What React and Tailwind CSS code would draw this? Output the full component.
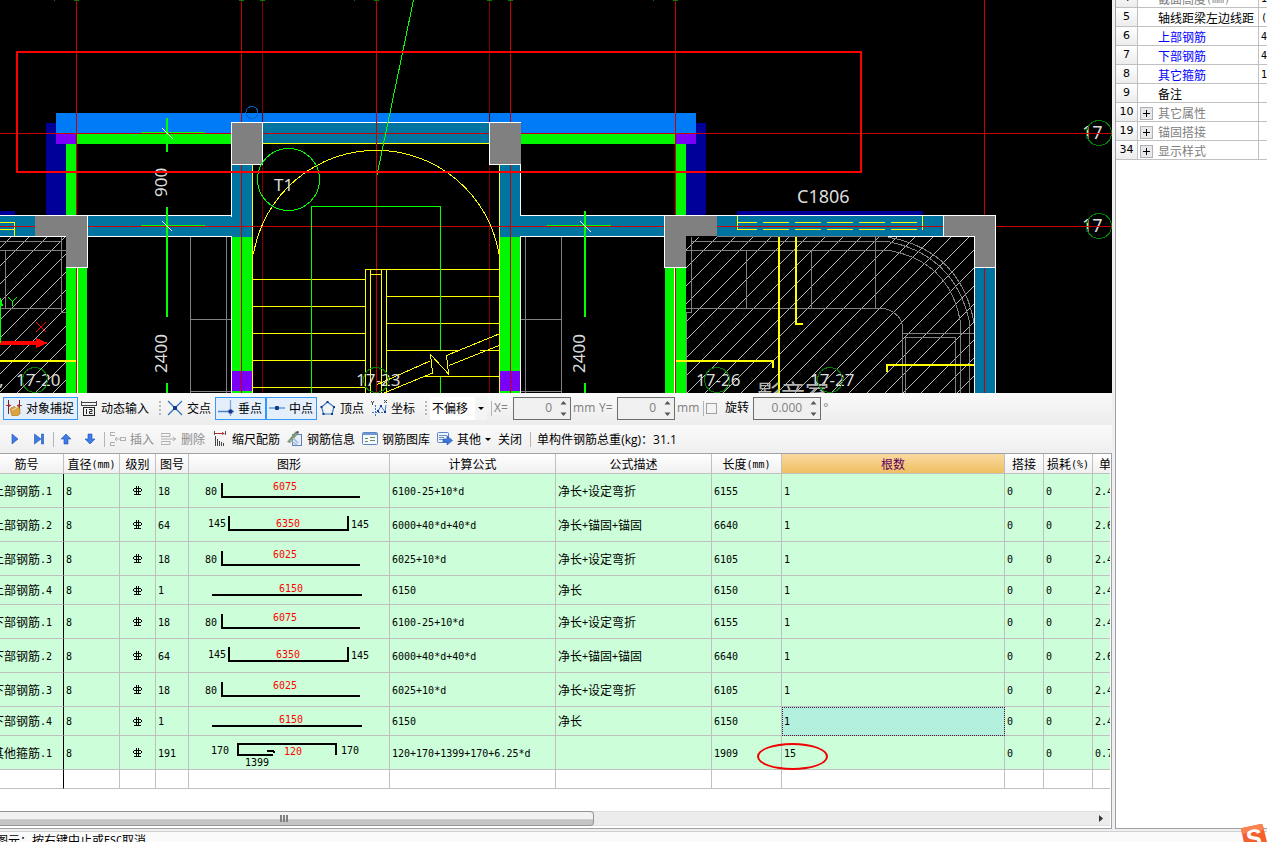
import { Fragment } from "react";

const MONO = "font-['DejaVu_Sans_Mono',monospace] text-[10px]";

/* CJK runs stay at 12px, latin runs switch to a 6px wide fixed pitch */
function Mixed({ text }) {
  return text.split(/([\x20-\x7e]+)/).map((part, i) =>
    i % 2 ? (
      <span key={i} className={`${MONO} whitespace-pre align-[1px] leading-none`}>{part}</span>
    ) : (
      <Fragment key={i}>{part}</Fragment>
    )
  );
}

/* ---------- CAD view ---------- */

const fills = [
  ["#000099", [[46, 123, 20, 92], [686, 123, 20, 92], [0, 211, 15, 4], [737, 211, 186, 4]]],
  ["#007bf7", [[56, 113, 640, 21]]],
  ["#0074a0", [
    [263, 123, 226, 20], [232, 165, 20, 72], [0, 216, 35, 20], [88, 216, 144, 20],
    [500, 165, 20, 72], [520, 216, 145, 20], [717, 216, 227, 20], [975, 268, 20, 125],
  ]],
  ["#00f700", [
    [77, 134, 154, 10], [521, 134, 155, 10], [66, 144, 10, 71], [676, 144, 10, 71],
    [66, 268, 21, 125], [665, 268, 21, 125], [232, 237, 20, 156], [500, 237, 20, 156],
  ]],
  ["#7b00f7", [[56, 134, 20, 10], [676, 134, 20, 10], [232, 371, 20, 20], [500, 371, 20, 20]]],
];

const columns = [
  [231, 122, 31, 42], [490, 122, 31, 42], [35, 216, 52, 20], [66, 216, 21, 51],
  [665, 216, 52, 20], [665, 216, 21, 51], [944, 216, 51, 20], [975, 216, 20, 51],
];

const stairs =
  "M253 279.5H365M253 306.5H365M253 333.5H365M253 360.5H365M253 387.5H365" +
  "M365.5 393V269.5H499M370.5 393V269M381.5 393V269M386.5 393V269M370 274.5H381" +
  "M386 296.5H499M386 323.5H499M386 350.5H458M480 350.5H499M424 376.5H499" +
  "M499 334L446.500 355.500L448.500 374L430.500 354.500L432.500 373L384 393M430 361L376 385M499 345.500L449 365.500";

const furniture =
  "M190.500 237V393M226.500 237V393M190 319.500H231M190 391.500H231" +
  "M525.500 237V393M561.500 237V393M521 319.500H561M521 391.500H561" +
  "M0 241.500H61M0 250.500H66M5.500 250V308M0 308.500H61M61.500 237V312.500H66V393" +
  "M691 241.500H888Q955 255 969.500 322V393M686 250.500H890Q950 262 960.500 322V393" +
  "M691.500 237V312.500H686V393M746.500 250V308M811.500 250V308M875.500 237V308" +
  "M686 308.500H885Q902 314 902.500 328V393M902 333.500H974M905.500 393V337.500H955.500V393M717 236.500H888" +
  "M888 237Q960 250 974 322";

const hatchLines = (x0, x1, y0, y1, first, step) => {
  let d = "";
  for (let c = first; c < x1 + y1; c += step) {
    const bx = Math.max(x0, c - y1);
    const tx = Math.min(x1, c - y0);
    if (tx > bx) d += `M${bx} ${c - bx}L${tx} ${c - tx}`;
  }
  return d;
};

function AxisBubble({ cx, cy }) {
  return <circle cx={cx} cy={cy} r="12.5" fill="none" stroke="#008000" />;
}

function CadView() {
  return (
    <svg className="block h-[393px] w-full shrink-0 bg-black" shapeRendering="crispEdges" role="img" aria-label="CAD">
      <path d={hatchLines(0, 66, 237, 393, 248, 18) + hatchLines(686, 974, 237, 393, 936, 18)} stroke="#b8b8b8" />
      <path d={furniture} stroke="#808080" fill="none" />

      {fills.map(([color, rects]) =>
        rects.map(([x, y, w, h]) => <rect key={`${x}-${y}`} x={x} y={y} width={w} height={h} fill={color} />)
      )}

      {/* wall outlines */}
      <path
        d="M262 122.500H490M231.500 164V393M88 215.500H231M88 236.500H231M0 215.500H35M0 236.500H66M520.500 164V215.500H665M520 236.500H665M520.500 237V393M717 215.500H944M888 236.500H975M974.500 237V393M995.500 215V393M77.500 268V393M674.500 268V393"
        stroke="#fff"
        fill="none"
      />
      <path d="M231.500 217V236" stroke="#0074a0" />
      <path d="M263 143.500H489M252.500 165V393M499.500 165V393" stroke="#ff0" />
      <path
        d="M737.500 216V230M922.500 216V230M737 222.500H757M737 229.500H757M0 222.500H14.500V236M0 229.500H14"
        stroke="#ff0"
        fill="none"
      />
      <path d="M763 222.500H917M763 229.500H917" stroke="#ff0" strokeDasharray="26 6" />

      {/* axes */}
      <path
        d="M76.500 0V215M76.500 268V393M241.500 0V393M376.500 0V393M510.500 0V393M675.500 0V215M675.500 268V393M984.500 0V393M0 133.500H1112M0 226.500H1112"
        stroke="#c80000"
        fill="none"
      />
      <path d="M262.500 0V393M489.500 0V393" stroke="#800000" />
      <path d="M54 .5H55M74 .5H79M239 .5H244M260 .5H265M354 .5H355M374 .5H379M487 .5H492M508 .5H513M673 .5H678M653 .5H654" stroke="#008000" />

      {columns.map(([x, y, w, h], i) => (
        <rect key={i} x={x} y={y} width={w} height={h} fill="#808080" />
      ))}
      <path
        d="M231.500 122.500H262.500V164.500H231.500ZM521 122.500H489.500V164.500H520M35 215.500H87.500V267.500H66M717 215.500H664.500V267.500H686M943.500 236V215.500H995.500V267.500H975M943 236.500H974.500V267"
        stroke="#fff"
        fill="none"
      />

      {/* stairwell */}
      <path d={stairs} stroke="#ff0" fill="none" />
      <path d="M253.500 254A124.500 124.500 0 0 1 499 254" stroke="#ff0" fill="none" />
      <path d="M311.500 393V206.500H440.500V350M440.500 377V393" stroke="#0f0" fill="none" />
      <circle cx="288.5" cy="179.500" r="31" stroke="#0f0" fill="none" />
      <path d="M413.500 0L377 175" stroke="#0f0" />
      <circle cx="252" cy="112.500" r="6" stroke="#0060c8" fill="none" />

      {/* dimensions */}
      <path d="M167 118V152M167 207V317M167 383V393M585 211V317M585 383V393" stroke="#0f0" strokeWidth="2" />
      <path d="M141 132.500H205M141 225.500H205M547 225.500H611" stroke="#0f0" />
      <path d="M162 128L173 139M162 221L172 231M580 221L591 232" stroke="#fff" />

      <path
        d="M0 361H76M676 361H773V368M779 237V393M796 237V324H803M887 372V365H974"
        stroke="#ff0"
        strokeWidth="2"
        fill="none"
      />

      {/* UCS marker */}
      <path d="M0 343H38" stroke="#f00" strokeWidth="4" />
      <path d="M36 338L48 343L36 348Z" fill="#f00" />
      <path d="M0 300V343" stroke="#0f0" strokeWidth="2" />
      <path d="M0 296L3 306H0Z" fill="#0f0" />
      <path d="M8 297L12.500 301.500L17 297M12.500 301V306" stroke="#0f0" fill="none" />
      <path d="M36 322L46 332M46 322L36 332" stroke="#f00" />

      <g className="fill-[#dcdcdc] font-['Noto_Sans',sans-serif] text-[17px]">
        <text x="274" y="191">T1</text>
        <text x="797" y="203" className="text-[18px]">C1806</text>
        <text x="16" y="386">17-20</text>
        <text x="-1" y="386">,</text>
        <text x="356" y="386">17-23</text>
        <text x="696" y="386">17-26</text>
        <text x="810" y="386">17-27</text>
        <text x="1082" y="139" className="text-[18px]">17</text>
        <text x="1082" y="232" className="text-[18px]">17</text>
        <text transform="translate(167 197) rotate(-90)">900</text>
        <text transform="translate(167 373) rotate(-90)">2400</text>
        <text transform="translate(585 373) rotate(-90)">2400</text>
        <text x="757" y="402" className="fill-[#b4b4b4] font-['Noto_Sans_CJK_SC',sans-serif] text-[24px]">影音室</text>
      </g>
      <AxisBubble cx={35} cy={380} />
      <AxisBubble cx={376} cy={380} />
      <AxisBubble cx={717} cy={380} />
      <AxisBubble cx={830} cy={380} />
      <AxisBubble cx={1099} cy={133} />
      <AxisBubble cx={1099} cy={226} />
      <path d="M1082 133.500H1112M1082 226.500H1112M376.500 368V393" stroke="#c80000" />

      <rect x="17" y="52" width="844" height="120" fill="none" stroke="#f00" strokeWidth="2" />
    </svg>
  );
}

/* ---------- toolbar icons ---------- */

function Icon({ children }) {
  return (
    <svg width="16" height="16" viewBox="0 0 16 16" fill="none" className="shrink-0">
      {children}
    </svg>
  );
}

const icons = {
  snap: (
    <Icon>
      <path d="M2.500 0V14M13.500 0V14" stroke="#7a1f1f" />
      <path d="M0 5.500H5M11 5.500H16" stroke="#a33" />
      <path d="M3 4l2 1.500-2 1.500zM13 4l-2 1.500 2 1.500z" fill="#a33" />
      <path d="M4 9l2-2 1 2 1-3 2 2 2-2 2 3v5l-3 2H6z" fill="#d9a441" stroke="#a87422" strokeWidth=".6" />
      <path d="M6 10l6-3" stroke="#f8e3a8" />
    </Icon>
  ),
  dynamic: (
    <Icon>
      <path d="M.5 1V5M15.500 1V5M1 2.500H15" stroke="#444" />
      <path d="M0 5.500H16" stroke="#444" />
      <rect x="2.500" y="7.500" width="11" height="8" stroke="#222" />
      <path d="M5.500 9V14M8 9.500H11V11.500H8.500V13.500H11.500" stroke="#222" />
    </Icon>
  ),
  cross: (
    <Icon>
      <path d="M1 1L15 15M15 1L1 15" stroke="#3070c0" strokeWidth="1.300" />
      <rect x="6" y="6" width="4" height="4" rx="1" fill="#123a8c" />
    </Icon>
  ),
  perp: (
    <Icon>
      <path d="M0 11.500H16" stroke="#4a82c8" strokeWidth="1.500" />
      <path d="M12.500 0V16" stroke="#7fa6d8" strokeWidth="1.300" />
      <rect x="10.500" y="9.500" width="4" height="4" rx="1" fill="#123a8c" />
    </Icon>
  ),
  mid: (
    <Icon>
      <path d="M0 8H16" stroke="#6a9ad4" strokeWidth="1.500" />
      <rect x="6" y="6" width="4" height="4" rx="1" fill="#123a8c" />
    </Icon>
  ),
  vertex: (
    <Icon>
      <path d="M7.500 2L14 7L12 14H3.500L1.500 7Z" stroke="#3a78c4" strokeWidth="1.200" />
      <path d="M6.500 1h2v2h-2zM0.500 6h2v2h-2zM13 6h2v2h-2zM2.500 13h2v2h-2zM11 13h2v2h-2z" fill="#123a8c" />
    </Icon>
  ),
  coord: (
    <Icon>
      <path d="M4.500 5V16M1 12.500H16" stroke="#3a78c4" strokeDasharray="2 1" />
      <path d="M7 11L10 6L14 12L15 5" stroke="#3a78c4" />
      <path d="M0 1l1.500 2L3 1M1.500 3v2M13 0l3 3M16 0l-3 3" stroke="#444" />
      <path d="M6 10h2v2H6zM9 5h2v2H9zM13 11h2v2h-2z" fill="#123a8c" />
    </Icon>
  ),
  insert: (
    <Icon>
      <path d="M0 1.500H5M0 4.500H5M0 11.500H5M0 14.500H5M.5 1V5M.5 11V15" stroke="#b0b0b0" />
      <path d="M5 8H10M7 6L5 8L7 10" stroke="#b0b0b0" />
      <rect x="10.500" y="6.500" width="5" height="3" stroke="#b0b0b0" />
    </Icon>
  ),
  remove: (
    <Icon>
      <path d="M0 2.500H9V5.500H0ZM0 10.500H9V13.500H0Z" stroke="#b0b0b0" />
      <path d="M0 8H15M12 6L14.500 8L12 10" stroke="#b0b0b0" />
    </Icon>
  ),
  scale: (
    <Icon>
      <path d="M2.500 0V4M13.500 0V4" stroke="#555" />
      <path d="M3 2.500H11" stroke="#a33" />
      <path d="M10 1l3 1.500-3 1.500z" fill="#a33" />
      <path d="M3.500 5V15M5.500 8V15M7.500 10V15M9.500 11V15M11.500 12V15" stroke="#444" />
    </Icon>
  ),
  info: (
    <Icon>
      <rect x="5.500" y="3.500" width="9" height="11" fill="#e6eefa" stroke="#5d82bb" />
      <path d="M0 11L8 1L11 3L3 12Z" fill="#7f9b74" />
      <path d="M8 1l3-1 1 1-1 2z" fill="#555" />
      <path d="M3 9L10 14M6 7l5 5" stroke="#9db5d6" strokeWidth="1.500" />
    </Icon>
  ),
  library: (
    <Icon>
      <rect x=".5" y="1.500" width="15" height="12" rx="1" fill="#f4f8ff" stroke="#5b86c5" />
      <path d="M1 3H15" stroke="#6e98d6" strokeWidth="2" />
      <path d="M3 7.500H6M8 6.500H13M3 10.500H6M8 9.500H13" stroke="#6a8a5a" />
    </Icon>
  ),
  other: (
    <Icon>
      <rect x=".5" y="1.500" width="11" height="10" rx="1" fill="#eef4fd" stroke="#5b86c5" />
      <path d="M2 4.500H10M2 6.500H7M2 8.500H7" stroke="#6c8fc4" />
      <path d="M6 8h4V5l5.500 4.500L10 14v-3H6z" fill="#3f78dc" stroke="#1c4fae" strokeWidth=".6" />
    </Icon>
  ),
};

function ToolButton({ icon, label, active, disabled, children }) {
  return (
    <button
      type="button"
      disabled={disabled}
      className={`flex h-[23px] shrink-0 items-center gap-1 border pl-[2px] pr-[3px] ${
        active ? "border-[#3399ff] bg-[#e4effb]" : "border-transparent"
      } ${disabled ? "text-[#8c8c8c]" : ""}`}
    >
      {icon && icons[icon]}
      <span>{label}</span>
      {children}
    </button>
  );
}

function NavButton({ label, d }) {
  return (
    <button type="button" aria-label={label} className="flex h-[23px] w-6 items-center justify-center">
      <svg width="12" height="12" viewBox="0 0 12 12">
        <path d={d} fill="#3f7be6" stroke="#1b50b5" strokeWidth=".6" />
      </svg>
    </button>
  );
}

const Sep = () => <span className="h-[15px] w-px bg-[#b4b4b4]" />;
const Grip = () => <span className="ml-[6px] mr-[3px] h-[14px] w-[2px] border-l-2 border-dotted border-[#b8b8b8]" />;

function Caret() {
  return (
    <svg width="6" height="3" viewBox="0 0 6 3" className="shrink-0">
      <path d="M0 0H6L3 3Z" fill="#000" />
    </svg>
  );
}

function Spin({ id, value, wide }) {
  return (
    <span className={`flex h-[23px] items-center border border-[#6d6d6d] bg-[#f0f0f0] ${wide ? "w-[68px]" : "w-[58px]"}`}>
      <input id={id} defaultValue={value} className="w-full min-w-0 bg-transparent pr-[8px] text-right outline-none" />
      <svg width="7" height="15" viewBox="0 0 7 15" className="mr-[3px] shrink-0">
        <path d="M0.500 3.500L3.500 0L6.500 3.500ZM0.500 11.500L3.500 15L6.500 11.500Z" fill="#555" />
      </svg>
    </span>
  );
}

function SnapBar() {
  return (
    <div className="flex h-8 items-center overflow-hidden bg-gradient-to-b from-[#fafafa] to-[#ececec] pb-[2px] pl-[3px]">
      <ToolButton icon="snap" label="对象捕捉" active />
      <ToolButton icon="dynamic" label="动态输入" />
      <Grip />
      <ToolButton icon="cross" label="交点" />
      <ToolButton icon="perp" label="垂点" active />
      <ToolButton icon="mid" label="中点" active />
      <ToolButton icon="vertex" label="顶点" />
      <ToolButton icon="coord" label="坐标" />
      <Grip />
      <span className="relative flex h-[23px] w-[57px] items-center bg-white">
        <select aria-label="偏移" className="h-full w-full appearance-none pl-[2px] outline-none">
          <option>不偏移</option>
        </select>
        <span className="pointer-events-none absolute inset-y-0 right-0 flex w-3 items-center justify-center bg-[#f4f4f4]">
          <Caret />
        </span>
      </span>
      <span className="w-1" />
      <Sep />
      <div className="flex items-center gap-[2px] pl-[2px] font-['Open_Sans','Noto_Sans_CJK_SC',sans-serif] text-[#808080]">
        <label htmlFor="dx" className="w-[17px]">X=</label>
        <Spin id="dx" value="0" />
        <span className="w-6">mm</span>
        <label htmlFor="dy" className="w-4">Y=</label>
        <Spin id="dy" value="0" />
        <span className="w-6">mm</span>
        <Sep />
        <input id="rot" type="checkbox" className="h-[11px] w-[11px] appearance-none border border-[#a0a0a0] bg-[#f4f4f4]" />
        <label htmlFor="rot" className="pl-[6px] pr-[2px] text-black">旋转</label>
        <Spin id="angle" value="0.000" wide />
        <label htmlFor="angle">°</label>
      </div>
    </div>
  );
}

function RebarBar() {
  return (
    <div className="flex h-7 items-center overflow-hidden bg-gradient-to-b from-[#fafafa] to-[#efefef] pl-[3px]">
      <NavButton label="下一条" d="M3 1V11L9 6Z" />
      <NavButton label="最后一条" d="M1.500 1V11L8 6ZM8.500 1H10.500V11H8.500Z" />
      <span className="w-[2px]" />
      <Sep />
      <NavButton label="上移" d="M6 1L11 6H8V11H4V6H1Z" />
      <NavButton label="下移" d="M6 11L11 6H8V1H4V6H1Z" />
      <span className="w-[2px]" />
      <Sep />
      <span className="w-[2px]" />
      <ToolButton icon="insert" label="插入" disabled />
      <ToolButton icon="remove" label="删除" disabled />
      <ToolButton icon="scale" label="缩尺配筋" />
      <ToolButton icon="info" label="钢筋信息" />
      <ToolButton icon="library" label="钢筋图库" />
      <ToolButton icon="other" label="其他">
        <Caret />
      </ToolButton>
      <ToolButton label="关闭" />
      <span className="w-1" />
      <Sep />
      <span className="whitespace-nowrap pl-[6px]">
        单构件钢筋总重<span className="font-['Open_Sans',sans-serif]">(kg)</span>：
        <span className="font-['Open_Sans',sans-serif]">31.1</span>
      </span>
    </div>
  );
}

/* ---------- rebar table ---------- */

const heads = ["筋号", "直径(mm)", "级别", "图号", "图形", "计算公式", "公式描述", "长度(mm)", "根数", "搭接", "损耗(%)", "单重(kg)"];
const widths = [74, 56, 36, 33, 201, 166, 156, 70, 223, 39, 49, 60];

const rows = [
  { name: "上部钢筋.1", no: "18", shape: "bend", left: "80", main: "6075", formula: "6100-25+10*d", desc: "净长+设定弯折", len: "6155", count: "1", weight: "2.431" },
  { name: "上部钢筋.2", no: "64", shape: "u", left: "145", main: "6350", formula: "6000+40*d+40*d", desc: "净长+锚固+锚固", len: "6640", count: "1", weight: "2.623" },
  { name: "上部钢筋.3", no: "18", shape: "bend", left: "80", main: "6025", formula: "6025+10*d", desc: "净长+设定弯折", len: "6105", count: "1", weight: "2.411" },
  { name: "上部钢筋.4", no: "1", shape: "line", main: "6150", formula: "6150", desc: "净长", len: "6150", count: "1", weight: "2.429" },
  { name: "下部钢筋.1", no: "18", shape: "bend", left: "80", main: "6075", formula: "6100-25+10*d", desc: "净长+设定弯折", len: "6155", count: "1", weight: "2.431" },
  { name: "下部钢筋.2", no: "64", shape: "u", left: "145", main: "6350", formula: "6000+40*d+40*d", desc: "净长+锚固+锚固", len: "6640", count: "1", weight: "2.623" },
  { name: "下部钢筋.3", no: "18", shape: "bend", left: "80", main: "6025", formula: "6025+10*d", desc: "净长+设定弯折", len: "6105", count: "1", weight: "2.411" },
  { name: "下部钢筋.4", no: "1", shape: "line", main: "6150", formula: "6150", desc: "净长", len: "6150", count: "1", weight: "2.429", selected: true },
  { name: "其他箍筋.1", no: "191", shape: "hoop", left: "170", main: "120", formula: "120+170+1399+170+6.25*d", desc: "", len: "1909", count: "15", weight: "0.754", circled: true },
];

function BarShape({ row }) {
  const { shape, left, main } = row;
  return (
    <svg
      width="200"
      height={shape === "line" ? 28 : 33}
      shapeRendering="crispEdges"
      fill="none"
      strokeWidth="2"
      className={`block ${MONO}`}
    >
      {shape === "bend" && (
        <>
          <path d="M33 9V23H171" stroke="#000" />
          <text x="16" y="21" fill="#000">{left}</text>
          <text x="84" y="16" fill="#f00">{main}</text>
        </>
      )}
      {shape === "u" && (
        <>
          <path d="M40 8V22H159V8" stroke="#000" />
          <text x="19" y="19" fill="#000">{left}</text>
          <text x="162" y="20" fill="#000">{left}</text>
          <text x="87" y="19" fill="#f00">{main}</text>
        </>
      )}
      {shape === "line" && (
        <>
          <path d="M23 19H173" stroke="#000" />
          <text x="90" y="16" fill="#f00">{main}</text>
        </>
      )}
      {shape === "hoop" && (
        <>
          <path d="M147 19V8H49V19H84M78 15H84L86 17" stroke="#000" />
          <text x="22" y="18" fill="#000">{left}</text>
          <text x="152" y="18" fill="#000">{left}</text>
          <text x="95" y="19" fill="#f00">{main}</text>
          <text x="56" y="30" fill="#000">1399</text>
        </>
      )}
    </svg>
  );
}

function GradeMark() {
  return (
    <svg width="9" height="9" viewBox="0 0 9 9" shapeRendering="crispEdges" className="mx-auto block">
      <path d="M3.500 0V8M5.500 0V8M1 2.500H8M1 5.500H8M.5 3V5M8.500 3V5M1 8.500H8" stroke="#000" fill="none" />
    </svg>
  );
}

function Cell({ children, className = "" }) {
  return (
    <td className={`overflow-hidden whitespace-nowrap border-b border-r border-[#c0c0c0] px-[2px] ${className}`}>
      {children}
    </td>
  );
}

function RebarTable() {
  return (
    <table className="-ml-[10px] w-[1163px] table-fixed border-separate border-spacing-0 leading-4">
      <colgroup>
        {widths.map((w, i) => (
          <col key={i} style={{ width: w }} />
        ))}
      </colgroup>
      <thead>
        <tr className="h-5">
          {heads.map((h) => (
            <th
              key={h}
              className={`overflow-hidden whitespace-nowrap border-b border-r border-[#c0c0c0] bg-gradient-to-b p-0 font-normal ${
                h === "根数" ? "from-[#fad9a0] to-[#efbf60] text-[#600060]" : "from-white to-[#f0f0f0]"
              } ${h.startsWith("单") ? "pl-[6px] text-left" : "text-center"}`}
            >
              <Mixed text={h} />
            </th>
          ))}
        </tr>
      </thead>
      <tbody>
        {rows.map((r) => (
          <tr key={r.name} className={`bg-[#ccffd9] ${r.shape === "line" ? "h-[29px]" : "h-[34px]"}`}>
            <Cell className="border-r-black"><Mixed text={r.name} /></Cell>
            <Cell><Mixed text="8" /></Cell>
            <Cell><GradeMark /></Cell>
            <Cell><Mixed text={r.no} /></Cell>
            <td className="border-b border-r border-[#c0c0c0] p-0"><BarShape row={r} /></td>
            <Cell><Mixed text={r.formula} /></Cell>
            <Cell><Mixed text={r.desc} /></Cell>
            <Cell><Mixed text={r.len} /></Cell>
            <td
              className={`relative border-b border-r border-[#c0c0c0] px-[2px] ${
                r.selected ? "bg-[#b4f0de] outline-1 -outline-offset-1 outline-dotted outline-[#402040]" : ""
              }`}
            >
              <Mixed text={r.count} />
              {r.circled && (
                <span className="absolute -left-[25px] top-[7px] h-[27px] w-[71px] rounded-[50%] border-2 border-[#f00000]" />
              )}
            </td>
            <Cell><Mixed text="0" /></Cell>
            <Cell><Mixed text="0" /></Cell>
            <Cell><Mixed text={r.weight} /></Cell>
          </tr>
        ))}
        <tr className="h-[19px] bg-white">
          {heads.map((h, i) => (
            <Cell key={h} className={i === 0 ? "border-r-black" : ""} />
          ))}
        </tr>
      </tbody>
    </table>
  );
}

function ScrollBar() {
  return (
    <div className="flex h-[15px] items-stretch border-y border-[#e0e0e0] bg-[#ececec]">
      <div className="-my-px flex w-[53.5%] items-center justify-center gap-px rounded-r-sm border border-l-0 border-[#959595] bg-gradient-to-b from-[#f2f2f2] from-50% to-[#c4c4c4] to-60% pr-6">
        <span className="h-[7px] w-[2px] bg-[#808080]" />
        <span className="h-[7px] w-[2px] bg-[#808080]" />
        <span className="h-[7px] w-[2px] bg-[#808080]" />
      </div>
      <button type="button" aria-label="向右滚动" className="ml-auto flex w-[18px] items-center justify-center">
        <svg width="4" height="7" viewBox="0 0 4 7">
          <path d="M0 0V7L4 3.500Z" fill="#333" />
        </svg>
      </button>
    </div>
  );
}

/* ---------- property panel ---------- */

const props = [
  { id: "4", name: "截面高度(mm)", value: "180", tone: "text-[#808080]" },
  { id: "5", name: "轴线距梁左边线距", value: "(50)", tone: "text-black" },
  { id: "6", name: "上部钢筋", value: "4", tone: "text-[#0000ff]" },
  { id: "7", name: "下部钢筋", value: "4", tone: "text-[#0000ff]" },
  { id: "8", name: "其它箍筋", value: "1", tone: "text-[#0000ff]" },
  { id: "9", name: "备注", value: "", tone: "text-black" },
  { id: "10", name: "其它属性", group: true, tone: "text-[#808080]" },
  { id: "19", name: "锚固搭接", group: true, tone: "text-[#808080]" },
  { id: "34", name: "显示样式", group: true, tone: "text-[#808080]" },
];

function PropertyPanel() {
  return (
    <aside className="w-[152px] shrink-0 overflow-hidden border-b border-l border-[#a0a0a8] bg-white">
      <table className="-mt-[11px] w-[180px] table-fixed border-separate border-spacing-0 leading-4">
        <colgroup>
          <col className="w-[22px]" />
          <col className="w-[121px]" />
          <col />
        </colgroup>
        <tbody>
          {props.map((p) => (
            <tr key={p.id} className="h-[19px]">
              <th className="border-b border-r border-[#c0c0c0] bg-gradient-to-b from-white to-[#ececec] p-0 text-center font-['DejaVu_Sans',sans-serif] text-[11px] font-normal">
                {p.id}
              </th>
              <td className={`border-b border-r border-[#c0c0c0] p-0 pt-[2px] ${p.tone}`}>
                <span className="flex items-center whitespace-nowrap">
                  <span className="flex w-5 shrink-0 pl-[2px]">
                    {p.group && (
                      <button
                        type="button"
                        aria-label={`展开${p.name}`}
                        className="flex h-[13px] w-[13px] items-center justify-center border border-[#b0b0b0] bg-[#e8e8ec]"
                      >
                        <svg width="7" height="7" shapeRendering="crispEdges">
                          <path d="M0 3.500H7M3.500 0V7" stroke="#000" />
                        </svg>
                      </button>
                    )}
                  </span>
                  <span><Mixed text={p.name} /></span>
                </span>
              </td>
              <td className="whitespace-nowrap border-b border-[#c0c0c0] px-[2px]">
                <Mixed text={p.value || ""} />
              </td>
            </tr>
          ))}
        </tbody>
      </table>
    </aside>
  );
}

function ImeBadge() {
  return (
    <svg width="30" height="30" viewBox="0 0 30 30" className="absolute -right-[2px] top-[823px]">
      <path d="M2 6Q2 5 3 5L22 1Q24 1 24 3L29 23L7 29Z" fill="#f4602c" />
      <path d="M2 6Q2 5 3 5L22 1Q24 1 24 3L25 7L3 11Z" fill="#fa8250" />
      <text x="6" y="24" transform="rotate(-10 14 15)" className="fill-white font-['Liberation_Sans',sans-serif] text-[25px] font-bold italic">S</text>
    </svg>
  );
}

export default function App() {
  return (
    <div className="relative flex h-screen flex-col overflow-hidden bg-[#f0f0f0] font-['Noto_Sans_CJK_SC',sans-serif] text-[12px] text-black">
      <div className="flex min-h-0 flex-1">
        <main className="mr-[3px] flex min-w-0 flex-1 flex-col">
          <CadView />
          <SnapBar />
          <RebarBar />
          <section className="flex min-h-0 flex-1 flex-col overflow-hidden border-b border-r border-t border-[#a0a0a8] bg-white pb-[2px] pr-px">
            <div className="min-h-0 flex-1 overflow-hidden">
              <RebarTable />
            </div>
            <ScrollBar />
          </section>
        </main>
        <PropertyPanel />
      </div>
      <footer className="mt-[2px] h-[11px] shrink-0 overflow-hidden whitespace-nowrap border-t border-[#d0d0d0] bg-[#fafafa] leading-4">
        <span className="-ml-1">图元；按右键中止或</span>
        <Mixed text="ESC" />
        取消
      </footer>
      <ImeBadge />
    </div>
  );
}
